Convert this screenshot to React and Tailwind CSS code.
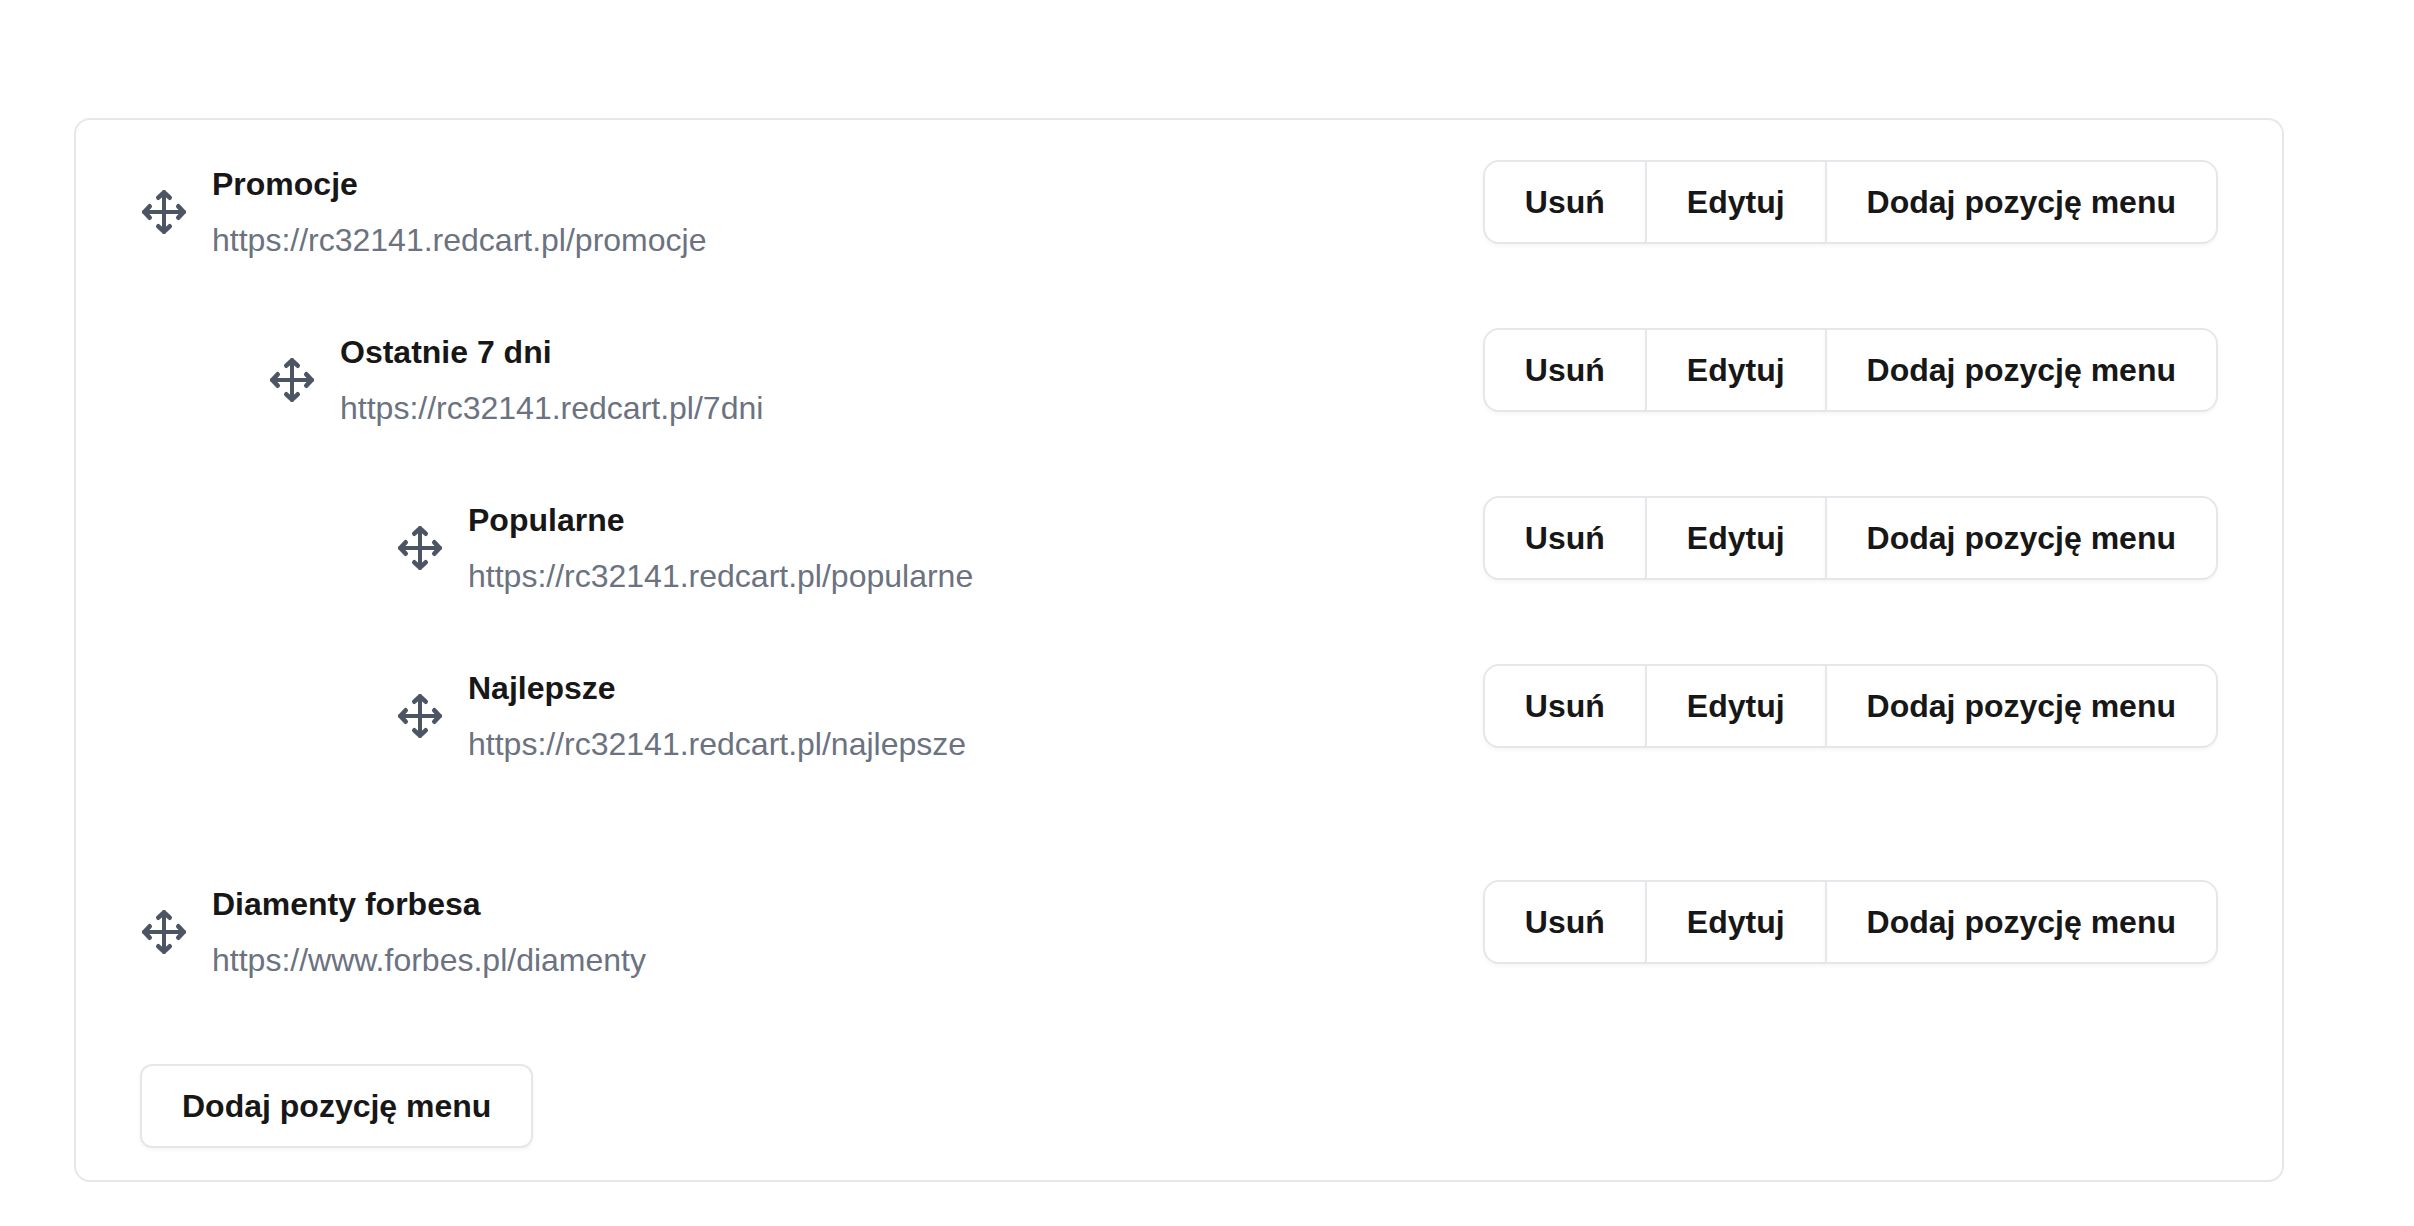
const MENU = [
  {
    name: "Promocje",
    url: "https://rc32141.redcart.pl/promocje",
    children: [
      {
        name: "Ostatnie 7 dni",
        url: "https://rc32141.redcart.pl/7dni",
        children: [
          { name: "Popularne", url: "https://rc32141.redcart.pl/popularne" },
          { name: "Najlepsze", url: "https://rc32141.redcart.pl/najlepsze" },
        ],
      },
    ],
  },
  { name: "Diamenty forbesa", url: "https://www.forbes.pl/diamenty" },
];

const BUTTON =
  "h-[84px] cursor-pointer border-2 border-[#e5e7eb] bg-white px-10 font-bold whitespace-nowrap shadow-[0_2px_4px_rgba(0,0,0,0.04)]";

function MoveIcon() {
  return (
    <svg
      className="size-12"
      viewBox="0 0 24 24"
      fill="none"
      stroke="currentColor"
      strokeLinecap="round"
      strokeLinejoin="round"
      aria-hidden="true"
    >
      <path strokeWidth="2" d="M12 2v20M2 12h20" />
      <path
        strokeWidth="2.3"
        d="M9.15 4.85L12 2.15l2.85 2.7M9.15 19.15L12 21.85l2.85-2.7M4.85 9.15L2.15 12l2.7 2.85M19.15 9.15L21.85 12l-2.7 2.85"
      />
    </svg>
  );
}

function ItemActions() {
  return (
    <div className="flex shrink-0">
      <button type="button" className={BUTTON + " rounded-l-2xl"}>Usuń</button>
      <button type="button" className={BUTTON + " -ml-0.5"}>Edytuj</button>
      <button type="button" className={BUTTON + " -ml-0.5 rounded-r-2xl"}>Dodaj pozycję menu</button>
    </div>
  );
}

function MenuItem({ item }) {
  return (
    <li>
      <div className="flex items-start justify-between gap-8">
        <div className="flex min-w-0 items-center gap-6">
          <button type="button" aria-label={"Przenieś " + item.name} className="shrink-0 cursor-move text-[#4b5563]">
            <MoveIcon />
          </button>
          <div className="flex min-w-0 flex-col gap-2">
            <h3 className="font-bold">{item.name}</h3>
            <a href={item.url} className="text-[#6b7280]">{item.url}</a>
          </div>
        </div>
        <ItemActions />
      </div>
      {item.children && <MenuList items={item.children} nested />}
    </li>
  );
}

function MenuList({ items, nested }) {
  return (
    <ul className={nested ? "mt-16 flex flex-col gap-16 pl-32" : "flex flex-col gap-28"}>
      {items.map((item) => (
        <MenuItem key={item.url} item={item} />
      ))}
    </ul>
  );
}

export default function App() {
  return (
    <main className="min-h-screen bg-white pt-[118px] pr-[130px] pb-11 pl-[74px] font-['Liberation_Sans',Arial,sans-serif] text-[32px] leading-[48px] text-[#171717]">
      <section className="rounded-2xl border-2 border-[#e5e7eb] px-16 pt-10 pb-8">
        <MenuList items={MENU} />
        <button type="button" className={BUTTON + " mt-20 rounded-xl"}>Dodaj pozycję menu</button>
      </section>
    </main>
  );
}
